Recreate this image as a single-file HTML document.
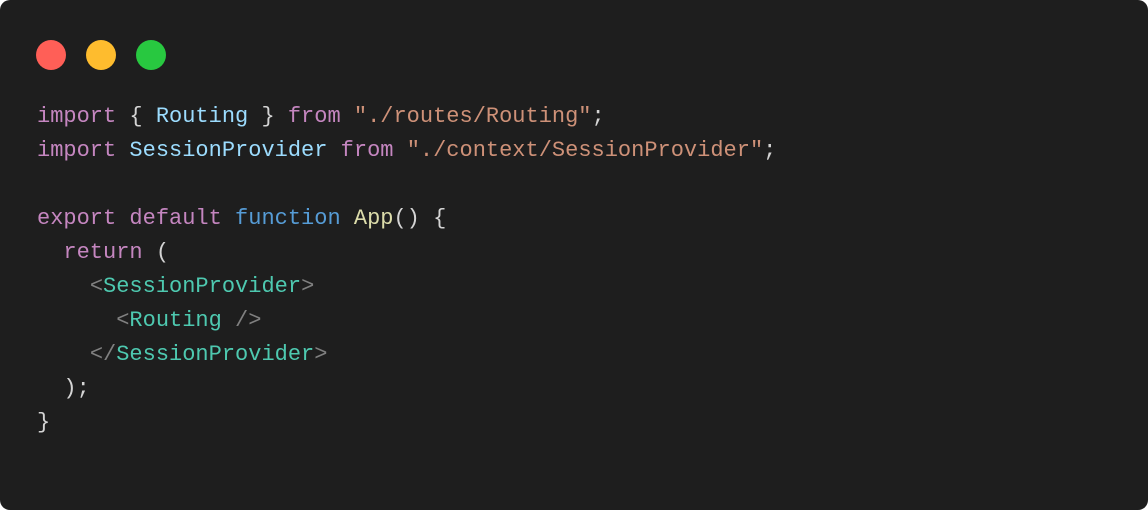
<!DOCTYPE html>
<html><head><style>
html,body{margin:0;padding:0;background:#fff;}
.win{position:absolute;left:0;top:0;width:1148px;height:510px;background:#1e1e1e;border-radius:10px;overflow:hidden;}
.dot{position:absolute;top:40px;width:30px;height:30px;border-radius:50%;}
pre{position:absolute;left:37px;top:100px;margin:0;font-family:"Liberation Mono",monospace;font-size:22px;line-height:34px;color:#d4d4d4;}
.k{color:#c586c0}.v{color:#9cdcfe}.s{color:#ce9178}.f{color:#569cd6}.a{color:#dcdcaa}.t{color:#4ec9b0}.g{color:#808080}
</style></head><body>
<div class="win">
<div class="dot" style="left:36px;background:#ff5f57"></div>
<div class="dot" style="left:86px;background:#febc2e"></div>
<div class="dot" style="left:136px;background:#28c840"></div>
<pre><span class="k">import</span> { <span class="v">Routing</span> } <span class="k">from</span> <span class="s">"./routes/Routing"</span>;
<span class="k">import</span> <span class="v">SessionProvider</span> <span class="k">from</span> <span class="s">"./context/SessionProvider"</span>;

<span class="k">export</span> <span class="k">default</span> <span class="f">function</span> <span class="a">App</span>() {
  <span class="k">return</span> (
    <span class="g">&lt;</span><span class="t">SessionProvider</span><span class="g">&gt;</span>
      <span class="g">&lt;</span><span class="t">Routing</span> <span class="g">/&gt;</span>
    <span class="g">&lt;/</span><span class="t">SessionProvider</span><span class="g">&gt;</span>
  );
}</pre>
</div>
</body></html>
